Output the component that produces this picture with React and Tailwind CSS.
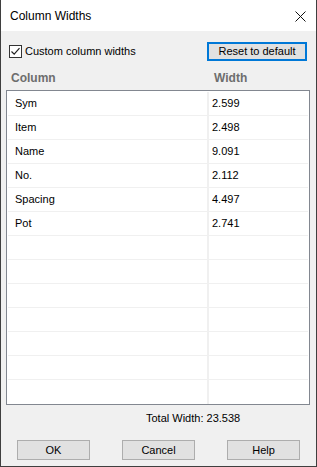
import React from 'react';

const rows = [
  { name: 'Sym', width: '2.599' },
  { name: 'Item', width: '2.498' },
  { name: 'Name', width: '9.091' },
  { name: 'No.', width: '2.112' },
  { name: 'Spacing', width: '4.497' },
  { name: 'Pot', width: '2.741' },
];

// 13 rows in the list, the rest are empty
const allRows = [...rows, ...Array.from({ length: 13 - rows.length }, () => ({ name: '', width: '' }))];

function DialogButton({ children, className = '' }) {
  return (
    <button className={`h-[20px] w-[73px] bg-[#e1e1e1] border border-[#adadad] text-[11px] text-black leading-none ${className}`}>
      {children}
    </button>
  );
}

export default function App() {
  return (
    <div className="w-[317px] h-[467px] flex flex-col border-x border-b border-[#3f3f3f] bg-[#f0f0f0] font-['Liberation_Sans',Arial,sans-serif] text-[11px] text-black overflow-hidden">
      {/* title bar */}
      <div className="h-[31px] bg-white flex items-center justify-between pl-[9px] pr-[10px] shrink-0">
        <span className="text-[12px] leading-none pt-[1px]">Column Widths</span>
        <svg width="11" height="11" viewBox="0 0 11 11" className="mt-[1px]">
          <path d="M0.5 0.5 L10.5 10.5 M10.5 0.5 L0.5 10.5" stroke="#111" strokeWidth="1" />
        </svg>
      </div>

      {/* top controls */}
      <div className="flex items-center justify-between pl-[8px] pr-[9px] mt-[11px]">
        <label className="flex items-center gap-[3px]">
          <span className="w-[13px] h-[13px] border border-[#333] bg-white flex items-center justify-center">
            <svg width="11" height="11" viewBox="0 0 11 11">
              <path d="M1.5 5.5 L4.2 8.2 L9.5 2.2" fill="none" stroke="#222" strokeWidth="1.2" />
            </svg>
          </span>
          <span className="leading-none">Custom column widths</span>
        </label>
        <button className="h-[19px] w-[100px] border-2 border-[#0078d7] bg-[#e1e1e1] text-[11px] leading-none">
          Reset to default
        </button>
      </div>

      {/* header */}
      <div className="flex mt-[11px] pl-[10px] text-[12px] font-bold text-[#6d6d6d] leading-none">
        <span className="w-[203px]">Column</span>
        <span>Width</span>
      </div>

      {/* list */}
      <div className="ml-[5px] mt-[6px] w-[304px] border border-[#828790] bg-white p-[1px] pb-0">
        {allRows.map((r, i) => (
          <div key={i} className={`flex h-[24px] ${i < allRows.length - 1 ? 'border-b border-[#f0f0f0]' : ''}`}>
            <div className="w-[201px] pl-[7px] flex items-center border-r-2 border-[#f0f0f0]">{r.name}</div>
            <div className="flex-1 pl-[3px] flex items-center">{r.width}</div>
          </div>
        ))}
      </div>

      {/* total */}
      <div className="mt-[8px] pl-[145px] leading-none h-[12px]">Total Width: 23.538</div>

      {/* buttons */}
      <div className="flex mt-[15px] pl-[16px] gap-[32px]">
        <DialogButton>OK</DialogButton>
        <DialogButton>Cancel</DialogButton>
        <DialogButton>Help</DialogButton>
      </div>
    </div>
  );
}
